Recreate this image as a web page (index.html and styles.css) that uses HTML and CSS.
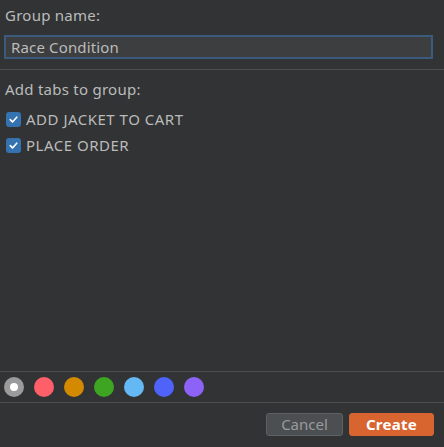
FILE: index.html
```html
<!DOCTYPE html>
<html>
<head>
<meta charset="utf-8">
<link rel="stylesheet" href="styles.css">
</head>
<body>
<div class="dialog">
  <div class="name-section">
    <div class="label">Group name:</div>
    <div class="input">Race Condition</div>
  </div>
  <div class="tabs-section">
    <div class="label">Add tabs to group:</div>
    <div class="check-row">
      <span class="checkbox"><svg viewBox="0 0 16 16" width="16" height="16"><path d="M4 8.2 L6.8 11 L12 5.2" fill="none" stroke="#fff" stroke-width="2" stroke-linecap="round" stroke-linejoin="round"/></svg></span>
      <span class="check-label">ADD JACKET TO CART</span>
    </div>
    <div class="check-row">
      <span class="checkbox"><svg viewBox="0 0 16 16" width="16" height="16"><path d="M4 8.2 L6.8 11 L12 5.2" fill="none" stroke="#fff" stroke-width="2" stroke-linecap="round" stroke-linejoin="round"/></svg></span>
      <span class="check-label">PLACE ORDER</span>
    </div>
  </div>
  <div class="colors">
    <span class="dot grey selected"></span>
    <span class="dot red"></span>
    <span class="dot orange"></span>
    <span class="dot green"></span>
    <span class="dot sky"></span>
    <span class="dot blue"></span>
    <span class="dot purple"></span>
  </div>
  <div class="buttons">
    <button class="btn cancel">Cancel</button>
    <button class="btn create">Create</button>
  </div>
</div>
</body>
</html>
```
FILE: styles.css
```css
html, body {
  margin: 0;
  padding: 0;
  background: #313335;
}
.dialog {
  width: 444px;
  height: 447px;
  display: flex;
  flex-direction: column;
  font-family: "Noto Sans", sans-serif;
  font-size: 15px;
  color: #bbbbbb;
  box-sizing: border-box;
}
.label {
  line-height: 18px;
  letter-spacing: 0.25px;
}
.name-section {
  padding: 6px 11px 10px 4px;
  border-bottom: 1px solid #4c4d4f;
}
.name-section .label {
  padding-left: 1px;
  margin-bottom: 11px;
}
.input {
  height: 24px;
  box-sizing: border-box;
  border: 2px solid #3b5a7e;
  background: #3d3e40;
  padding: 0 5px;
  line-height: 20px;
  font-size: 15px;
  letter-spacing: 0.15px;
  color: #bbbbbb;
}
.tabs-section {
  flex: 1;
  padding: 10px 5px 0 5px;
}
.tabs-section .label {
  margin-bottom: 13px;
}
.check-row {
  display: flex;
  align-items: center;
  gap: 5px;
  height: 16px;
  margin-bottom: 10px;
  padding-left: 1px;
}
.checkbox {
  width: 15px;
  height: 15px;
  border-radius: 3px;
  background: #3572b0;
  display: flex;
  align-items: center;
  justify-content: center;
}
.checkbox svg {
  width: 13px;
  height: 13px;
}
.check-label {
  line-height: 16px;
  letter-spacing: 0.5px;
}
.colors {
  border-top: 1px solid #4c4d4f;
  border-bottom: 1px solid #4c4d4f;
  height: 30px;
  display: flex;
  align-items: center;
  gap: 10px;
  padding-left: 4px;
}
.dot {
  width: 20px;
  height: 20px;
  border-radius: 50%;
  display: block;
  position: relative;
}
.dot.selected::after {
  content: "";
  position: absolute;
  left: 6px;
  top: 6px;
  width: 8px;
  height: 8px;
  border-radius: 50%;
  background: #ffffff;
}
.grey { background: #9b9b9b; }
.red { background: #fe5f68; }
.orange { background: #d38a00; }
.green { background: #3da522; }
.sky { background: #64b8f3; }
.blue { background: #4f63fb; }
.purple { background: #8c63f6; }
.buttons {
  display: flex;
  justify-content: flex-end;
  gap: 6px;
  padding: 10px 10px 11px 0;
}
.btn {
  height: 23px;
  box-sizing: border-box;
  border-radius: 3px;
  font-family: "Noto Sans", sans-serif;
  font-size: 15px;
  line-height: 19px;
  padding: 0;
  margin: 0;
}
.cancel {
  width: 77px;
  background: #4b4f52;
  border: 1px solid #5e6163;
  color: #9a9a9a;
}
.create {
  width: 85px;
  background: #d86530;
  border: 1px solid #d86530;
  color: #ffffff;
  font-weight: bold;
  letter-spacing: 0.3px;
}
```
